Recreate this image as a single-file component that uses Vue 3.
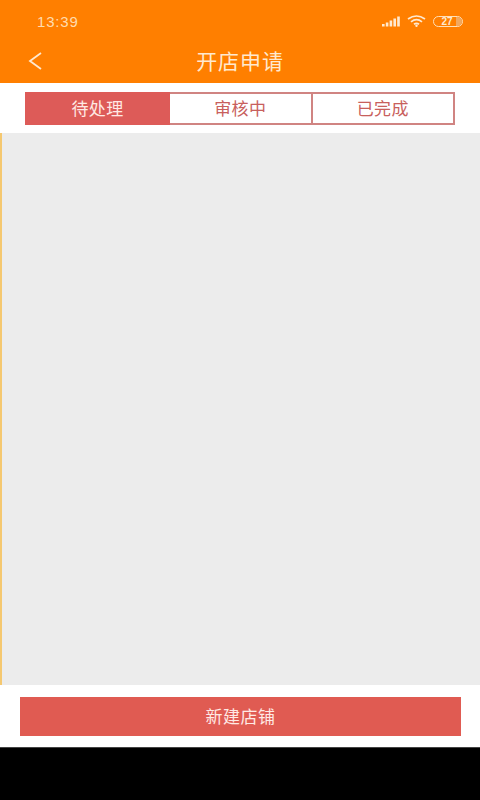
<template>
  <div class="page">
    <div class="header">
      <div class="status">
        <span class="time">13:39</span>
        <div class="status-icons">
          <svg class="signal" width="18" height="11" viewBox="0 0 18 11">
            <rect x="0" y="8" width="2.6" height="2.5" />
            <rect x="3.8" y="6.5" width="2.6" height="4" />
            <rect x="7.6" y="4.5" width="2.6" height="6" />
            <rect x="11.4" y="2.5" width="2.6" height="8" />
            <rect x="15.2" y="0.5" width="2.6" height="10" />
          </svg>
          <svg class="wifi" width="19" height="12" viewBox="0 0 19 12">
            <path d="M1 4 Q9.5 -2 18 4" />
            <path d="M4 6.8 Q9.5 2.4 15 6.8" />
            <path d="M7 9.3 Q9.5 7.4 12 9.3" />
            <circle cx="9.5" cy="10.8" r="1.2" />
          </svg>
          <div class="battery">
            <span class="battery-num">27</span>
            <span class="battery-end"></span>
          </div>
        </div>
      </div>
      <div class="nav">
        <svg class="back" width="16" height="20" viewBox="0 0 16 20">
          <path d="M13 2 L2 10 L13 18" />
        </svg>
        <span class="title">开店申请</span>
      </div>
    </div>

    <div class="tabs">
      <div
        v-for="(tab, i) in tabs"
        :key="tab"
        class="tab"
        :class="{ active: i === current }"
        @click="current = i"
      >{{ tab }}</div>
    </div>

    <div class="list"></div>

    <div class="footer">
      <button class="new-btn">新建店铺</button>
    </div>
    <div class="navbar"></div>
  </div>
</template>

<script setup>
import { ref } from "vue";

const tabs = ["待处理", "审核中", "已完成"];
const current = ref(0);
</script>

<style>
html, body {
  margin: 0;
  background: #fff;
}
</style>

<style scoped>
* {
  box-sizing: border-box;
}

.page {
  width: 480px;
  height: 800px;
  display: flex;
  flex-direction: column;
  background: #fff;
  font-family: "Liberation Sans", "Noto Sans CJK SC", sans-serif;
}

.header {
  height: 83px;
  background: #ff7f00;
  color: #ffe9cf;
  padding-top: 12px;
}

.status {
  height: 18px;
  display: flex;
  align-items: center;
  justify-content: space-between;
  padding: 0 17px 0 37px;
}

.time {
  font-size: 15px;
  letter-spacing: 0.8px;
  color: #ffdcae;
}

.status-icons {
  display: flex;
  align-items: center;
  gap: 7px;
}

.signal {
  fill: #ffe9cf;
}

.wifi {
  fill: #ffe9cf;
  stroke: #ffe9cf;
}

.wifi path {
  fill: none;
  stroke-width: 1.7;
}

.wifi circle {
  stroke: none;
}

.battery {
  position: relative;
  width: 30px;
  height: 11px;
  border: 1px solid #ffe0b8;
  border-radius: 6px;
  display: flex;
  align-items: center;
  justify-content: center;
  overflow: hidden;
}

.battery-num {
  font-size: 10px;
  font-weight: bold;
  color: #ffe9cf;
  margin-left: -2px;
}

.battery-end {
  position: absolute;
  top: 0;
  right: 0;
  bottom: 0;
  width: 6px;
  background: #f0a860;
}

.nav {
  height: 40px;
  margin-top: 11px;
  display: grid;
  grid-template-columns: 1fr auto 1fr;
  align-items: center;
  padding: 0 28px;
}

.back {
  fill: none;
  stroke: #ffe9cf;
  stroke-width: 1.8;
}

.title {
  margin-top: -2px;
  font-size: 21px;
  letter-spacing: 0.9px;
  color: #ffe9cf;
}

.tabs {
  display: flex;
  margin: 9px 25px 0;
  height: 33px;
}

.tab {
  flex: 1;
  display: flex;
  align-items: center;
  justify-content: center;
  padding-bottom: 3px;
  font-size: 17px;
  letter-spacing: 0.4px;
  color: #c8605c;
  background: #fff;
  border: 2px solid #d08482;
  border-left-width: 0;
}

.tab:first-child {
  flex: 0 0 145px;
  border-left-width: 2px;
}

.tab.active {
  background: #dd5b58;
  border-color: #dd5b58;
  color: #ffe9e4;
}

.list {
  height: 552px;
  margin-top: 8px;
  background: #ececec;
  border-left: 2px solid #f5c870;
}

.footer {
  height: 62px;
  padding: 12px 19px 11px 20px;
}

.new-btn {
  display: block;
  width: 100%;
  height: 39px;
  padding-bottom: 4px;
  border: none;
  background: #e05b52;
  color: #ffe9e4;
  font-family: inherit;
  font-size: 17px;
  letter-spacing: 0.5px;
}

.navbar {
  flex: 1;
  background: #000;
  border-top: 1px solid #444;
}
</style>
